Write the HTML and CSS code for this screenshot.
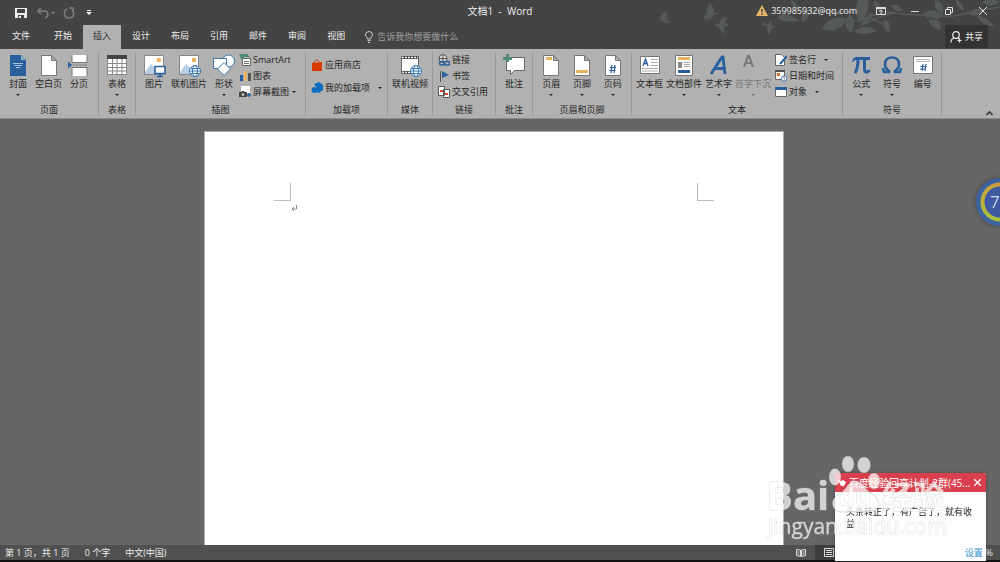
FILE: index.html
```html
<!DOCTYPE html>
<html lang="zh-CN">
<head>
<meta charset="utf-8">
<meta name="viewport" content="width=device-width, initial-scale=1">
<title>文档1 - Word</title>
<link rel="stylesheet" href="styles.css">
</head>
<body>
<div class="app">
<header class="header">
  <svg class="decor" width="350" height="49" viewBox="650 0 350 49" aria-hidden="true">
    <g fill="#555958">
      <path d="M667 10c-4 2-6 5-6 8l-3 2 4 1c3 3 6 2 9 1l-4-2c1-4-1-6 0-10z"/>
      <path d="M710 3c-3 4-4 7-3 10l-4 4 3 3c4 0 6-3 8-5l5-1-5-2c0-4-2-7-4-9z"/>
      <path d="M728 17c-6 0-8 3-8 6l-6 2 5 3c1 3 3 5 6 5l-1-6 6-2-5-2c0-3 1-5 3-6z"/>
      <path d="M763 21l4 4c2-3 4-5 5-5l-1 5 5 2-5 2c0 3-1 5-3 5l-1-8-5-1z"/>
      <path d="M777 17c6-5 14-3 23 4-8 0-17 3-23-4zM791 0c4 1 9 7 9 12-6-2-9-7-9-12zM802 22c7-2 9-8 6-13-6 4-8 8-6 13z"/>
      <path d="M822 29c4-9 15-14 24-10-2 8-12 15-24 10zM850 14c5 6 5 14 1 19-7-4-7-13-1-19zM854 32c7-7 16-6 23-1-8 3-15 4-23 1zM858 0h10c2 8-2 17-8 23-5-7-5-16-2-23z"/>
      <path d="M873 13c-6 1-10 6-12 11 7 0 11-5 12-11zM885 19c-3 5-2 10 4 14 3-6 1-11-4-14zM875 0c3 3 6 6 5 11-5-2-7-6-5-11zM891 5c6-1 9 2 12 6-6 1-10-1-12-6z"/>
      <path d="M923 14c7-7 14-3 20 2-7 6-14 5-20-2zM929 17c0 8 3 11 12 13 0-8-4-13-12-13zM935 0c8 1 9 9 8 15-6-3-9-8-8-15zM968 14c5-6 11-6 17-5-4 7-10 8-17 5zM982 2c6-4 11-2 18-1-4 5-12 7-18 1zM977 16c6 0 12 4 17 10-7 1-13-3-17-10zM956 0c5 2 8 6 8 11-5-2-9-6-8-11z"/>
    </g>
    <path d="M845 20c15 5 28-8 45-8 17 4 31 2 49 4 18 2 26-4 61-9M860 25c13-2 18-11 35-12M866 17c9 0 15 9 22 8M800 8c20 4 29 4 55 4" fill="none" stroke="#555958" stroke-width="1.5"/>
  </svg>
  <div class="titlebar">
    <div class="quick">
      <button class="qbtn" aria-label="保存"><svg width="12" height="12" viewBox="0 0 12 12"><path fill="#eee" fill-rule="evenodd" d="M0 1h12v10H0zM2 2v4h8V2zM3 8v3h1V9h2v2h3V8z"/></svg></button>
      <button class="qbtn undo" aria-label="撤消"><svg width="18" height="12" viewBox="0 0 18 12"><path d="M4 1L1 4l3 3M1 4h6c5 0 5 6 1 7" fill="none" stroke="#7c7c7c" stroke-width="1.6"/><path d="M14 5h4l-2 2z" fill="#888"/></svg></button>
      <button class="qbtn" aria-label="重复"><svg width="12" height="12" viewBox="0 0 12 12"><path d="M4 2C0 4 1 11 6 11s6-6 3-8M6 1h4v4" fill="none" stroke="#7c7c7c" stroke-width="1.6"/></svg></button>
      <button class="qbtn more" aria-label="自定义快速访问工具栏"><svg width="6" height="6" viewBox="0 0 6 6"><path d="M1 0h4v1H1zM0 2h6L3 5z" fill="#eee"/></svg></button>
    </div>
    <h1 class="title">文档1&nbsp; -&nbsp; Word</h1>
    <div class="account">
      <a class="mail" href="#"><svg width="12" height="12" viewBox="0 0 12 12"><path d="M6 0l6 11H0z" fill="#e9b868"/><path d="M6 4v3.500M6 8.500V10" stroke="#444" stroke-width="1.500"/></svg>359985932@qq.com</a>
      <button class="win" aria-label="功能区显示选项"><svg width="10" height="8" viewBox="0 0 10 8" fill="none" stroke="#ddd"><path d="M.5.5h9v7h-9zM0 1.500h10M5 7V3M3 4.500L5 3l2 1.500"/></svg></button>
      <button class="win" aria-label="最小化"><svg width="8" height="8" viewBox="0 0 8 8"><path d="M0 4.500h8" stroke="#ddd"/></svg></button>
      <button class="win" aria-label="向下还原"><svg width="8" height="8" viewBox="0 0 8 8" fill="none" stroke="#ddd"><path d="M.5 2.500h5v5h-5zM2.500 2V.5h5v5H6"/></svg></button>
      <button class="win" aria-label="关闭"><svg width="8" height="8" viewBox="0 0 8 8"><path d="M0 0l8 8M8 0L0 8" stroke="#ddd"/></svg></button>
    </div>
  </div>
  <div class="tabrow">
    <nav class="tabs">
      <button class="tab file">文件</button><button class="tab">开始</button><button class="tab active">插入</button><button class="tab">设计</button><button class="tab">布局</button><button class="tab">引用</button><button class="tab">邮件</button><button class="tab">审阅</button><button class="tab">视图</button>
    </nav>
    <label class="tell"><svg width="8" height="12" viewBox="0 0 8 12" fill="none" stroke="#ccc"><path d="M2.500 8C2.500 6 .5 6 .5 4a3.500 3.500 0 0 1 7 0c0 2-2 2-2 4zM2.500 9.500h3M3 11.500h2"/></svg><input type="text" placeholder="告诉我你想要做什么" aria-label="告诉我你想要做什么"></label>
    <button class="share"><svg width="12" height="12" viewBox="0 0 12 12" fill="none" stroke="#eee" stroke-width="1.200"><circle cx="6" cy="4" r="3.300"/><path d="M1 11.500c0-3 1-4 3-4.500M8 7l1 1M9.500 7.500v4M7.500 9.500h4"/></svg>共享</button>
  </div>
</header>

<section class="ribbon" aria-label="插入">
  <div class="group g-pages">
    <div class="tools">
      <button class="big"><svg viewBox="0 0 24 24"><path d="M4 1h11l5 5v16H4z" fill="#285f9c"/><path d="M15 1v5h5" fill="#8fb0d0"/><path d="M7 9.500h10M8 11.500h8M10 13.500h4" stroke="#a9c4de"/></svg>封面<i class="caret"></i></button>
      <button class="big"><svg viewBox="0 0 24 24"><path d="M4.500 1.500h10l5 5v15h-15zM14.500 1.500v5h5" fill="#fff" stroke="#777"/></svg>空白页</button>
      <button class="big"><svg viewBox="0 0 24 24"><path d="M5 1v7.500h15V1M5 22v-8.500h15V22" fill="#fff" stroke="#777"/><path d="M6 11h15" stroke="#777" stroke-dasharray="2 1"/><path d="M1 7.500l4 3.500-4 3.500z" fill="#285f9c"/></svg>分页</button>
    </div>
    <h2>页面</h2>
  </div>
  <div class="group g-table">
    <div class="tools">
      <button class="big"><svg viewBox="0 0 24 24"><path d="M2 2h20v18H2z" fill="#fff"/><path d="M2.500 5v15.500h19V5M2 9.500h20M2 13.500h20M2 17h20M7.500 5v15M12 5v15M17 5v15" fill="none" stroke="#888"/><path d="M2 1h20v4H2z" fill="#444"/></svg>表格<i class="caret"></i></button>
    </div>
    <h2>表格</h2>
  </div>
  <div class="group g-illus">
    <div class="tools">
      <button class="big"><svg viewBox="0 0 24 24"><path d="M2.500 1.500h19v19h-19z" fill="#fff" stroke="#888"/><path d="M3 18l6-8 5 5v5H3z" fill="#b9cee4"/><circle cx="17" cy="6" r="2.300" fill="#e5b45c"/><path d="M13 12.500h10v7H13zM18 19v3M15 22.500h6" fill="#fff" stroke="#285f9c" stroke-width="1.600"/></svg>图片</button>
      <button class="big"><svg viewBox="0 0 24 24"><path d="M2.500 1.500h19v19h-19z" fill="#fff" stroke="#888"/><path d="M3 18l6-8 5 5v5H3z" fill="#b9cee4"/><circle cx="17" cy="6" r="2.300" fill="#e5b45c"/><g fill="#fff" stroke="#3c73ab"><circle cx="18" cy="17" r="5.500"/><ellipse cx="18" cy="17" rx="2.500" ry="5.500"/><path d="M12.500 17h11M13.500 14.500h9M13.500 19.500h9"/></g></svg>联机图片</button>
      <button class="big"><svg viewBox="0 0 24 24"><g fill="#fff" stroke="#3c73ab"><circle cx="16.500" cy="7" r="6"/><path d="M1.500 4.500h13v10h-13z"/><path d="M12 8.500l6.500 6.500-6.500 6.500L5.500 15z"/></g></svg>形状<i class="caret"></i></button>
      <div class="stack">
        <button class="small"><svg viewBox="0 0 12 12"><path d="M0 0h8l3 3H5v4L2 5z" fill="#4d8c72"/><path d="M3.500 4.500h8v7h-8zM5 7.500h5M5 9.500h5" fill="#fff" stroke="#666"/></svg>SmartArt</button>
        <button class="small"><svg viewBox="0 0 12 12"><path d="M1 5h3v6H1z" fill="#285f9c"/><path d="M5 1h3v10H5z" fill="#e5b45c"/><path d="M9 3h3v8H9z" fill="#555"/></svg>图表</button>
        <button class="small"><svg viewBox="0 0 12 12"><path d="M2 0h9v7H2z" fill="#fff"/><path d="M0 6h2l1-1h2l1 1h2v5H0z" fill="#444"/><circle cx="4" cy="8.500" r="1.500" fill="#bbb"/><path d="M10 7v4M8 9h4" stroke="#285f9c" stroke-width="1.500"/></svg>屏幕截图<i class="caret"></i></button>
      </div>
    </div>
    <h2>插图</h2>
  </div>
  <div class="group g-addins">
    <div class="tools">
      <div class="stack two">
        <button class="small"><svg viewBox="0 0 12 12"><path d="M1 4l10-1v9H1z" fill="#d83b01"/><path d="M3 4c0-3 5-4 5-1" fill="none" stroke="#d83b01"/></svg>应用商店</button>
        <button class="small"><svg viewBox="0 0 12 12"><path d="M3 2l5-2 4 3v5l-4 3-2-1V6z" fill="#0f6cbd"/><circle cx="3.500" cy="8" r="3" fill="#0f6cbd"/></svg>我的加载项<i class="caret wide"></i></button>
      </div>
    </div>
    <h2>加载项</h2>
  </div>
  <div class="group g-media">
    <div class="tools">
      <button class="big"><svg viewBox="0 0 24 24"><path d="M3 2h18v18H3z" fill="#fff"/><path d="M3 3.500h18M3 18.500h18" stroke="#444" stroke-width="3"/><path d="M4 3.500h17M4 18.500h17" stroke="#eee" stroke-width="1.500" stroke-dasharray="2 1"/><path d="M3.500 2v18M20.500 2v18" stroke="#666"/><g fill="#fff" stroke="#3c73ab"><circle cx="18" cy="17" r="5.500"/><ellipse cx="18" cy="17" rx="2.500" ry="5.500"/><path d="M12.500 17h11M13.500 14.500h9M13.500 19.500h9"/></g></svg>联机视频</button>
    </div>
    <h2>媒体</h2>
  </div>
  <div class="group g-links">
    <div class="tools">
      <div class="stack flush">
        <button class="small"><svg viewBox="0 0 12 12" fill="none"><circle cx="5" cy="4.500" r="4" fill="#ddd" stroke="#555"/><path d="M1 4.500h8M5 .5v8" stroke="#555"/><g stroke="#285f9c" stroke-width="1.500"><rect x="1.500" y="7.500" width="5" height="3.500" rx="1.500"/><rect x="6.500" y="7.500" width="5" height="3.500" rx="1.500"/></g></svg>链接</button>
        <button class="small"><svg viewBox="0 0 12 12"><path d="M2.500 1v11" stroke="#555"/><path d="M4 1l7 4-7 3z" fill="#285f9c"/></svg>书签</button>
        <button class="small"><svg viewBox="0 0 12 12"><path d="M.5.5h6v9h-6zM5.500 3.500h6v8h-6z" fill="#fff" stroke="#555"/><path d="M2 5h3M7 8h3" stroke="#cf4b22" stroke-width="2"/></svg>交叉引用</button>
      </div>
    </div>
    <h2>链接</h2>
  </div>
  <div class="group g-comment">
    <div class="tools">
      <button class="big"><svg viewBox="0 0 24 24"><path d="M4.500 3.500h18v13h-10l-4 4v-4h-4z" fill="#fff" stroke="#666"/><path d="M5.500 0v8M1 4.500h9" stroke="#4d8c72" stroke-width="3"/></svg>批注</button>
    </div>
    <h2>批注</h2>
  </div>
  <div class="group g-hf">
    <div class="tools">
      <button class="big even"><svg viewBox="0 0 24 24"><path d="M4.500 1.500h10l5 5v15h-15zM14.500 1.500v5h5" fill="#fff" stroke="#777"/><path d="M7 3h6v3H7z" fill="#e5b45c"/></svg>页眉<i class="caret"></i></button>
      <button class="big even"><svg viewBox="0 0 24 24"><path d="M4.500 1.500h10l5 5v15h-15zM14.500 1.500v5h5" fill="#fff" stroke="#777"/><path d="M6 16h12v3H6z" fill="#e5b45c"/></svg>页脚<i class="caret"></i></button>
      <button class="big even"><svg viewBox="0 0 24 24"><path d="M4.500 1.500h10l5 5v15h-15zM14.500 1.500v5h5" fill="#fff" stroke="#777"/><path d="M11 11l-1 8M14 11l-1 8M9 13.500h6M8.500 16.500h6" stroke="#285f9c" stroke-width="1.200"/></svg>页码<i class="caret"></i></button>
    </div>
    <h2>页眉和页脚</h2>
  </div>
  <div class="group g-text">
    <div class="tools">
      <button class="big tight"><svg viewBox="0 0 24 24"><path d="M2.500 2.500h19v17h-19z" fill="#fff" stroke="#777"/><path d="M13 5.500h7M13 8.500h7M13 11.500h7M4 14.500h16M4 17h16" stroke="#aaa"/><path d="M5 12l2.500-7 2.500 7M6 9.500h3" fill="none" stroke="#285f9c" stroke-width="1.300"/></svg>文本框<i class="caret"></i></button>
      <button class="big tight"><svg viewBox="0 0 24 24"><path d="M3.500 1.500h17v20h-17z" fill="#fff" stroke="#777"/><path d="M6 3h12v3H6z" fill="#e5b45c"/><path d="M6 8h4v6H6z" fill="#888"/><path d="M12 8.500h6M12 10.500h6M12 12.500h6" stroke="#aaa"/><path d="M6 16h12v3H6z" fill="#285f9c"/></svg>文档部件<i class="caret"></i></button>
      <button class="big tight"><svg viewBox="0 0 24 24"><path d="M4 20L15 3h1l2 17M8 14.500h9" fill="none" stroke="#285f9c" stroke-width="2.800"/></svg>艺术字<i class="caret"></i></button>
      <button class="big tight off" disabled><svg viewBox="0 0 24 24"><path d="M3 13L7 2h1l4 11M5 9h6" fill="none" stroke="#777" stroke-width="2"/></svg>首字下沉<i class="caret"></i></button>
      <div class="stack">
        <button class="small"><svg viewBox="0 0 12 12"><path d="M.5.5h6l3 3v8h-9z" fill="#fff" stroke="#666"/><path d="M12 2L5 10" stroke="#285f9c" stroke-width="2"/></svg>签名行<i class="caret wide"></i></button>
        <button class="small"><svg viewBox="0 0 12 12"><path d="M.5.5h9v9h-9z" fill="#fff" stroke="#666"/><path d="M0 1h10" stroke="#555" stroke-width="2"/><path d="M2 3h3v3H2z" fill="#e07020"/><circle cx="9" cy="8.500" r="2.700" fill="#fff" stroke="#3c73ab"/><path d="M9 7v2h1" fill="none" stroke="#555" stroke-width=".7"/></svg>日期和时间</button>
        <button class="small"><svg viewBox="0 0 12 12"><path d="M.5 1.500h11v9H.5z" fill="#fff" stroke="#666"/><path d="M0 1h12v3H0z" fill="#285f9c"/></svg>对象<i class="caret wide"></i></button>
      </div>
    </div>
    <h2>文本</h2>
  </div>
  <div class="group g-symbols">
    <div class="tools">
      <button class="big even"><svg viewBox="0 0 24 24"><path d="M3 8c1-4 2-5 6-5h12v3H9C6 6 5 6 4 8z" fill="#285f9c"/><path d="M9 5c0 7-1 11-3 14M15.500 5v10c0 4 3 4 5 1" fill="none" stroke="#285f9c" stroke-width="3"/></svg>公式<i class="caret"></i></button>
      <button class="big even"><svg viewBox="0 0 24 24"><path d="M3 14l1 4h5v-1c-3-2-4-4-4-7 0-4 3-6.500 7-6.500s7 2.500 7 6.500c0 3-1 5-4 7v1h5l1-4" fill="none" stroke="#285f9c" stroke-width="2.600"/></svg>符号<i class="caret"></i></button>
      <button class="big even"><svg viewBox="0 0 24 24"><path d="M2.500 2.500h19v17h-19z" fill="#fff" stroke="#777"/><path d="M5 5.500h14M5 7.500h14" stroke="#bbb"/><path d="M12 10l-1 7M15 10l-1 7M9.500 12.500h6M9 15h6" stroke="#285f9c" stroke-width="1.200"/></svg>编号</button>
    </div>
    <h2>符号</h2>
  </div>
  <button class="collapse" aria-label="折叠功能区"><svg width="7" height="5" viewBox="0 0 7 5"><path d="M.5 4l3-3 3 3" fill="none" stroke="#333" stroke-width="1.600"/></svg></button>
</section>

<main class="workspace">
  <article class="page">
    <div class="corner left"><svg class="pilcrow" width="6" height="8" viewBox="0 0 6 8"><path d="M5.500 1v4H1M3 3L1 5l2 2" fill="none" stroke="#888"/></svg></div>
    <div class="corner right"></div>
  </article>
</main>

<footer class="status">
  <span>第 1 页，共 1 页</span><span>0 个字</span><span>中文(中国)</span>
  <div class="views">
    <button class="view" aria-label="阅读视图"><svg width="10" height="9" viewBox="0 0 10 9" fill="none" stroke="#ddd"><path d="M.5 1.500l4 .5v6.500l-4-1zM9.500 1.500l-4 .5v6.500l4-1zM1.500 4h2M1.500 6h2M6.500 4h2M6.500 6h2"/></svg></button>
    <button class="view on" aria-label="页面视图"><svg width="10" height="9" viewBox="0 0 10 9" fill="none" stroke="#ddd"><path d="M.5.5h9v8h-9zM2 2.500h6M2 4.500h6M2 6.500h6"/></svg></button>
  </div>
  <span class="percent">%</span>
</footer>
</div>

<div class="badge"><span>74</span></div>

<aside class="popup">
  <header class="popup-head"><svg width="10" height="9" viewBox="0 0 10 9"><path d="M1 2l3 1 2-1 3 2-2 4H4z" fill="#fff"/></svg><span class="popup-title">百度经验回享计划-2群(45...</span><button aria-label="关闭"><svg width="7" height="7" viewBox="0 0 7 7"><path d="M0 0l7 7M7 0L0 7" stroke="#fff" stroke-width="1.300"/></svg></button></header>
  <p>头条转正了，有广告了，就有收益</p>
  <a href="#">设置</a>
</aside>

<div class="watermark" aria-hidden="true">
  <svg width="184" height="90" viewBox="766 452 184 90">
    <g fill="#fff" fill-opacity=".72" stroke="#888" stroke-opacity=".3">
      <ellipse cx="848" cy="464" rx="6" ry="8"/><ellipse cx="864" cy="465" rx="6.500" ry="8"/><ellipse cx="835" cy="477" rx="6" ry="8.500"/><ellipse cx="874" cy="481" rx="6" ry="8"/>
      <path d="M855 481c-8 0-8 9-16 13-11 6-7 18 3 18h26c12 0 15-11 4-18-8-5-9-13-17-13z"/>
    </g>
    <g class="mark">
      <text x="766" y="510" class="bai">Bai</text>
      <text x="839" y="506" class="du">du</text>
      <text x="882" y="508" class="exp">经验</text>
      <text x="768" y="534" class="url">jingyan.baidu.com</text>
    </g>
  </svg>
</div>
</body>
</html>
```
FILE: styles.css
```css
* { box-sizing: border-box; }
body {
  margin: 0;
  background: #666;
  color: #262626;
  font: 9px/12px "Open Sans", "Noto Sans CJK SC", sans-serif;
}
button {
  margin: 0;
  padding: 0;
  border: 0;
  background: none;
  color: inherit;
  font: inherit;
  white-space: nowrap;
}
h1, h2, p { margin: 0; font: inherit; }
a { color: inherit; text-decoration: none; }
svg { display: block; flex: none; }

.app { display: flex; flex-direction: column; height: 100vh; overflow: hidden; border-bottom: 2px solid #111; }

.header { position: relative; background: #444; color: #eee; }
.decor { position: absolute; top: 0; right: 0; }
.titlebar, .tabrow { position: relative; }
.titlebar { display: grid; grid-template-columns: 1fr auto 1fr; align-items: center; height: 25px; }
.quick { display: flex; align-items: center; gap: 8px; padding-left: 15px; }
.qbtn.undo { margin-left: 2px; }
.qbtn.more { margin-left: 3px; }
.title { padding-bottom: 3px; font-size: 10px; }
.account { display: flex; align-items: center; justify-content: flex-end; padding-bottom: 3px; }
.mail { display: flex; align-items: center; gap: 3px; padding-right: 7px; }
.win { display: flex; align-items: center; justify-content: center; width: 34px; height: 22px; }

.tabrow { display: flex; height: 24px; padding-right: 12px; }
.tabs { display: flex; gap: 1px; padding-left: 2px; }
.tab { padding: 0 10px 2px; }
.tab.file { margin-right: 3px; }
.tab.active { background: #b1b1b1; color: #333; }
.tell { display: flex; flex: 1; align-items: center; gap: 4px; padding-left: 10px; }
.tell input { flex: 1; min-width: 0; padding: 0; border: 0; outline: 0; background: none; color: #eee; font: inherit; }
.tell input::placeholder { color: #a0a0a0; opacity: 1; }
.share { display: flex; align-items: center; gap: 3px; margin-bottom: 1px; padding: 0 5px; background: #333; }

.ribbon { display: flex; height: 70px; padding: 3px 0 2px; border-bottom: 1px solid #8a8a8a; background: #b1b1b1; }
.group { display: flex; flex: none; flex-direction: column; justify-content: space-between; padding: 0 5px; border-right: 1px solid #999; }
.group h2 { text-align: center; }
.g-pages { width: 99px; }
.g-table { width: 37px; }
.g-illus { width: 170px; }
.g-addins { width: 82px; }
.g-media { width: 45px; padding: 0; }
.g-links { width: 63px; }
.g-comment { width: 37px; }
.g-hf { width: 99px; padding: 0 3px; }
.g-text { width: 211px; padding: 0 3px; }
.g-symbols { width: 99px; padding: 0 3px; }
.tools { display: flex; align-items: flex-start; }
.big { display: flex; flex-direction: column; align-items: center; padding: 2px 4px 0; }
.big svg { width: 24px; height: 24px; margin: 0 -3px; }
.big .caret { margin-top: 4px; }
.big.even { width: 31px; }
.big.tight { padding: 2px 2px 0 1px; }
.off { color: #777; }
.caret { border: 2px solid transparent; border-top-color: currentColor; border-bottom: 0; }
.stack { display: flex; flex-direction: column; padding-left: 2px; }
.stack.flush { padding-left: 0; }
.small { display: flex; align-items: center; gap: 2px; height: 16px; }
.small svg { width: 12px; height: 12px; }
.small .caret { margin-left: 1px; }
.small .caret.wide { margin-left: 6px; }
.stack.two { gap: 7px; padding: 5px 0 0; }
.collapse { align-self: flex-end; margin-left: auto; padding: 0 7px 0 0; }

.workspace { display: flex; flex: 1; justify-content: center; min-height: 0; padding: 12px 13px 0 0; }
.page { display: flex; justify-content: space-between; width: 580px; padding: 51px 69px; background: #fff; border: 1px solid #aaa; border-bottom: 0; }
.corner { position: relative; width: 17px; height: 18px; border-bottom: 1px solid #bbb; }
.corner.left { border-right: 1px solid #bbb; }
.corner.right { border-left: 1px solid #bbb; }
.pilcrow { position: absolute; top: 21px; left: 17px; }

.status { display: flex; align-items: center; gap: 15px; height: 15px; padding: 0 7px 0 5px; background: #505050; color: #eee; }
.views { display: flex; align-self: stretch; margin-left: auto; padding-right: 150px; }
.view { display: flex; align-items: center; justify-content: center; width: 28px; }
.view.on { background: #3c3c3c; }
.percent { position: absolute; right: 7px; }

.badge { position: fixed; top: 178px; right: -24px; display: flex; align-items: center; width: 48px; height: 48px; padding-left: 14px; border-radius: 50%; background: radial-gradient(circle, #3f5aa0 0 15px, transparent 16px), radial-gradient(circle, transparent 0 19px, #3d62a0 20px), linear-gradient(#d09a3c, #a4c83c); box-shadow: 0 0 4px #444; color: #ccd4e8; font-size: 17px; }

.popup { position: fixed; right: 14px; bottom: 1px; display: flex; flex-direction: column; width: 151px; height: 88px; border-radius: 2px 2px 0 0; background: #fcfdfe; box-shadow: 0 0 3px #444; color: #222; }
.popup-head { display: flex; align-items: center; gap: 2px; height: 19px; padding: 0 5px 0 2px; border-radius: 2px 2px 0 0; background: #d93f4c; color: #fff; font-size: 10px; }
.popup-title { flex: 1; white-space: nowrap; }
.popup p { padding: 14px 12px 0 11px; }
.popup a { margin-top: auto; padding: 0 3px 2px; color: #2f8fce; text-align: right; }

.watermark { position: fixed; right: 50px; bottom: 20px; pointer-events: none; }
.mark { fill: rgba(255, 255, 255, .7); stroke: rgba(190, 190, 190, .4); paint-order: stroke; font-family: "Open Sans", "Noto Sans CJK SC", sans-serif; }
.bai { font-size: 40px; font-weight: 700; }
.du { font-size: 25px; font-weight: 700; }
.exp { font-size: 31px; font-weight: 700; }
.url { font-size: 21px; }
```
